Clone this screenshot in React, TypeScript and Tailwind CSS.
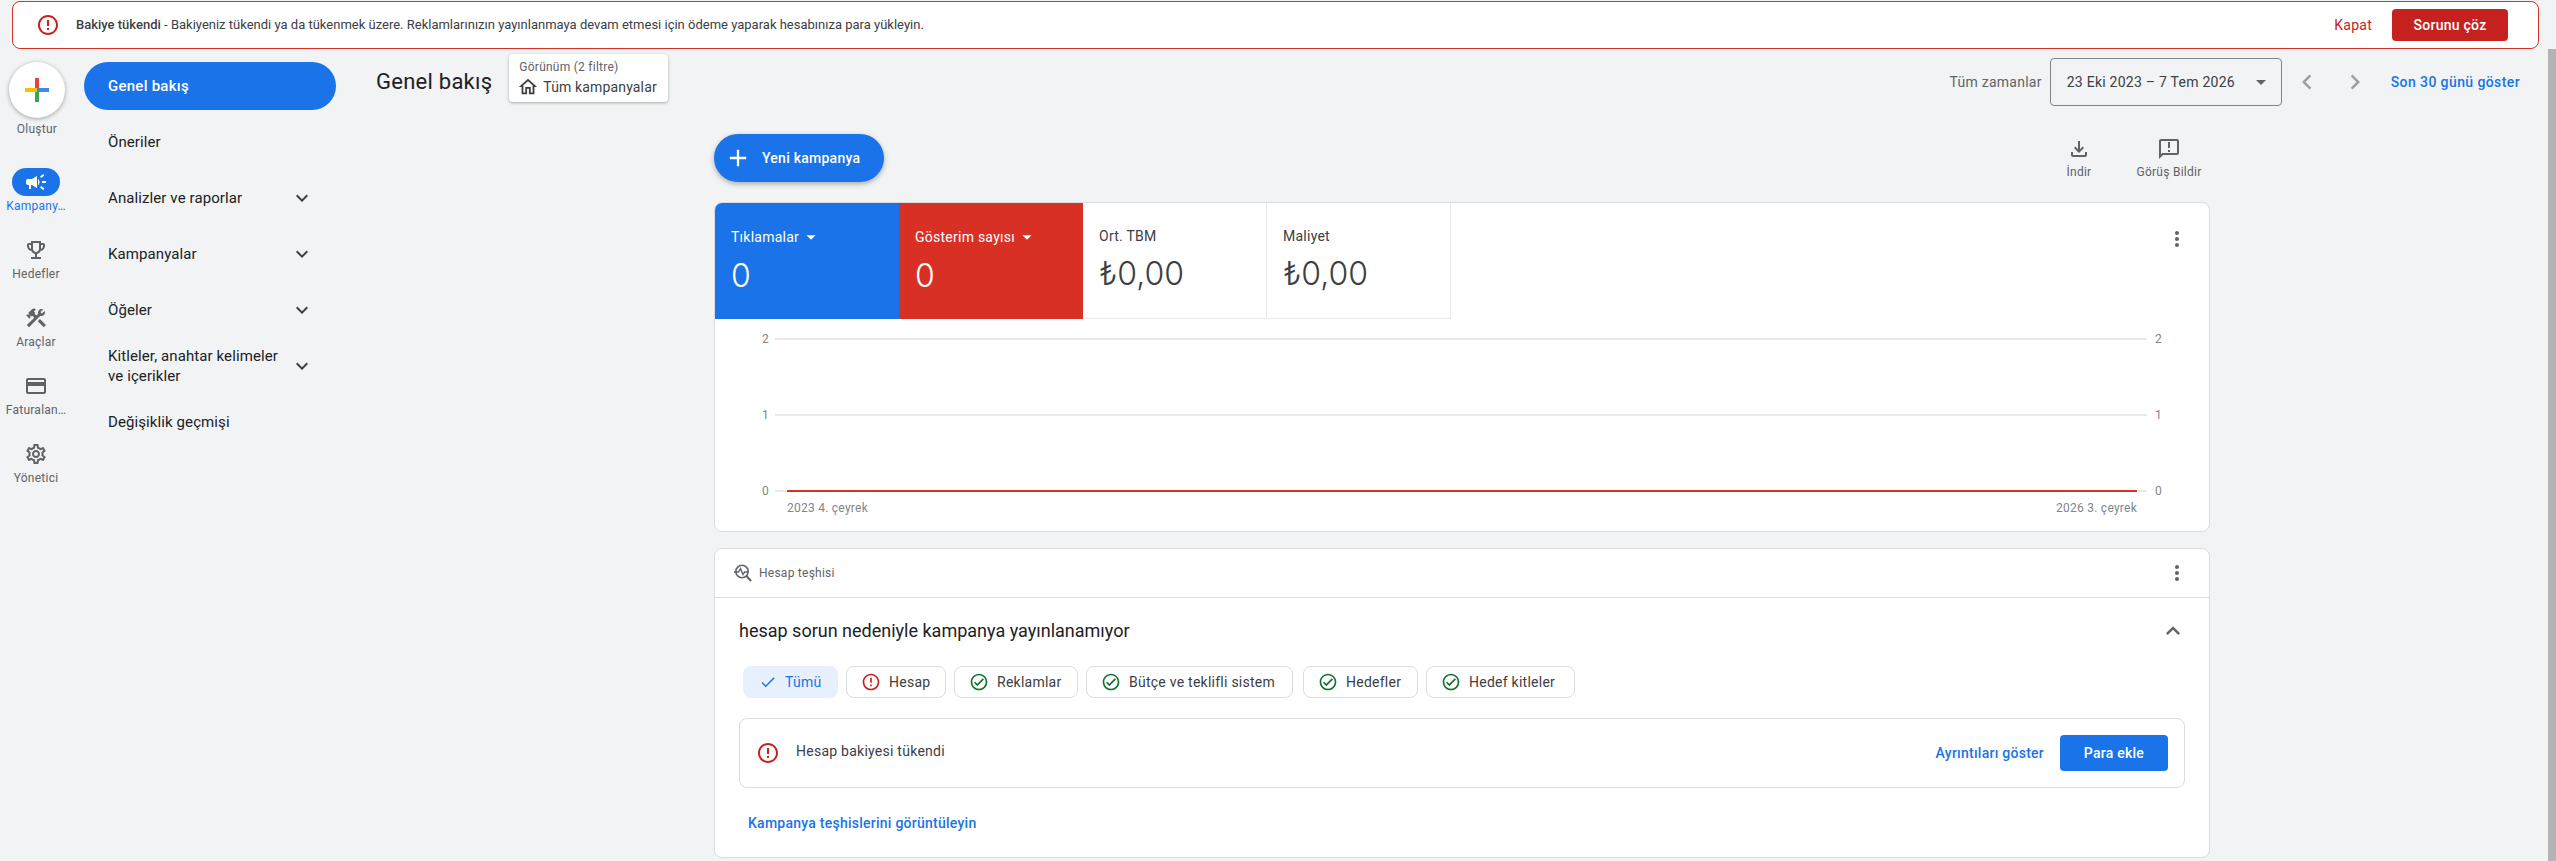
import {
  MdAdd,
  MdArrowDropDown,
  MdCampaign,
  MdCheck,
  MdChevronLeft,
  MdChevronRight,
  MdConstruction,
  MdExpandLess,
  MdExpandMore,
  MdMoreVert,
  MdOutlineAnnouncement,
  MdOutlineCheckCircle,
  MdOutlineCreditCard,
  MdOutlineEmojiEvents,
  MdOutlineErrorOutline,
  MdOutlineFileDownload,
  MdOutlineHome,
  MdOutlineSettings,
} from 'react-icons/md';

const rail = [
  { label: 'Kampany…', icon: MdCampaign, active: true },
  { label: 'Hedefler', icon: MdOutlineEmojiEvents },
  { label: 'Araçlar', icon: MdConstruction },
  { label: 'Faturalan…', icon: MdOutlineCreditCard },
  { label: 'Yönetici', icon: MdOutlineSettings },
];

const nav = [
  { label: 'Öneriler' },
  { label: 'Analizler ve raporlar', more: true },
  { label: 'Kampanyalar', more: true },
  { label: 'Öğeler', more: true },
  { label: 'Kitleler, anahtar kelimeler ve içerikler', more: true },
  { label: 'Değişiklik geçmişi' },
];

const tiles = [
  { label: 'Tıklamalar', value: '0', cls: 'bg-[#1a73e8] text-white', menu: true },
  { label: 'Gösterim sayısı', value: '0', cls: 'bg-[#d93025] text-white', menu: true },
  { label: 'Ort. TBM', value: '₺0,00', cls: 'bg-white text-[#3c4043] border-r border-b border-[#e8eaed]' },
  { label: 'Maliyet', value: '₺0,00', cls: 'bg-white text-[#3c4043] border-r border-b border-[#e8eaed]' },
];

const chips = [
  { label: 'Hesap', width: 'w-[100px]', bad: true },
  { label: 'Reklamlar', width: 'w-[124px]' },
  { label: 'Bütçe ve teklifli sistem', width: 'w-[207px]' },
  { label: 'Hedefler', width: 'w-[115px] ml-[2px]' },
  { label: 'Hedef kitleler', width: 'w-[149px]' },
];

function GooglePlus() {
  return (
    <svg width="24" height="24" viewBox="0 0 24 24">
      <rect x="10" y="0" width="4" height="12" fill="#ea4335" />
      <rect x="12" y="10" width="12" height="4" fill="#4285f4" />
      <rect x="10" y="12" width="4" height="12" fill="#34a853" />
      <rect x="0" y="10" width="12" height="4" fill="#fbbc04" />
    </svg>
  );
}

function DiagnosticsIcon() {
  return (
    <svg width="20" height="20" viewBox="0 0 20 20" fill="none" stroke="#5f6368" strokeWidth="1.6" className="mr-[6px]">
      <circle cx="9" cy="8.5" r="6.2" />
      <path d="M13.5 13l4.5 5" strokeWidth="2" />
      <path d="M1 9h4.5l2-3.5 2.5 6 1.6-2.5H15" strokeWidth="1.4" />
    </svg>
  );
}

function GridRow({ value }: { value: number }) {
  return (
    <div className="flex items-center h-[2px] text-[12px] text-[#80868b]">
      <span className="w-[56px] pr-[2px] text-right">{value}</span>
      <div className="flex-1 h-[2px] bg-[#e8eaed] ml-[4px] pl-[12px] pr-[10px]">
        {value === 0 && <div className="h-[2px] bg-[#d93025]" />}
      </div>
      <span className="w-[62px] pl-[8px] text-left">{value}</span>
    </div>
  );
}

export default function App() {
  return (
    <div className="h-[861px] overflow-hidden bg-[#f1f3f4] font-['Roboto',sans-serif] text-[#3c4043] flex flex-col tracking-[0.25px]">
      <div className="ml-[12px] mr-[17px] mt-[1px] h-[48px] shrink-0 rounded-[8px] border border-[#d93025] bg-white flex items-center pl-[23px] pr-[30px]">
        <MdOutlineErrorOutline className="text-[#c5221f] mr-[16px]" size={24} />
        <span className="text-[13px] tracking-normal text-[#3c4043]"><span className="font-medium">Bakiye tükendi</span> - Bakiyeniz tükendi ya da tükenmek üzere. Reklamlarınızın yayınlanmaya devam etmesi için ödeme yaparak hesabınıza para yükleyin.</span>
        <span className="ml-auto text-[14px] text-[#c5221f]">Kapat</span>
        <button className="ml-[20px] w-[116px] h-[32px] rounded-[4px] bg-[#c5221f] text-white text-[14px] font-medium">Sorunu çöz</button>
      </div>

      <div className="flex-1 min-h-0 flex">
        <div className="w-[76px] shrink-0 flex flex-col items-center pt-[13px]">
          <div className="w-[56px] h-[56px] rounded-full bg-white shadow-[0_1px_4px_rgba(60,64,67,0.45)] flex items-center justify-center ml-[-2px]">
            <GooglePlus />
          </div>
          <span className="text-[12px] mt-[3px] leading-[16px] text-[#5f6368] ml-[-2px]">Oluştur</span>
          <div className="mt-[31px] flex flex-col gap-[13px] ml-[-4px]">
            {rail.map((r) => (
              <div key={r.label} className="w-[68px] h-[55px] flex flex-col items-center">
                <div className={`w-[48px] h-[28px] rounded-full flex items-center justify-center ${r.active ? 'bg-[#1a73e8] text-white' : 'text-[#5f6368]'}`}>
                  <r.icon size={24} />
                </div>
                <span className={`text-[12px] mt-[2px] leading-[16px] whitespace-nowrap ${r.active ? 'text-[#1a73e8]' : 'text-[#5f6368]'}`}>{r.label}</span>
              </div>
            ))}
          </div>
        </div>

        <div className="w-[268px] shrink-0 pl-[8px] pt-[13px] pr-[8px]">
          <div className="h-[48px] rounded-full bg-[#1a73e8] text-white text-[15px] font-medium flex items-center pl-[24px]">Genel bakış</div>
          <div className="mt-[4px]">
            {nav.map((n) => (
              <div key={n.label} className="min-h-[56px] flex items-center pl-[24px] text-[15px] leading-[20px] font-[450] tracking-[0.1px] text-[#202124]">
                <span className="w-[176px]">{n.label}</span>
                {n.more && <MdExpandMore className="ml-[6px] text-[#3c4043]" size={24} />}
              </div>
            ))}
          </div>
        </div>

        <div className="flex-1 min-w-0 flex flex-col">
          <div className="h-[72px] shrink-0 flex items-start pl-[32px] pr-[28px]">
            <h1 className="text-[22px] leading-[28px] mt-[19px] text-[#202124]">Genel bakış</h1>
            <div className="ml-[17px] mt-[5px] w-[159px] h-[48px] rounded-[4px] bg-white shadow-[0_1px_3px_rgba(60,64,67,0.4)] pl-[10px] pt-[4px]">
              <div className="text-[12px] leading-[18px] text-[#5f6368]">Görünüm (2 filtre)</div>
              <div className="flex items-center text-[14px] leading-[20px] tracking-[0.15px] text-[#3c4043]">
                <MdOutlineHome size={22} className="mr-[4px] -ml-[2px]" />Tüm kampanyalar
              </div>
            </div>
            <span className="ml-auto mt-[23px] text-[14px] leading-[20px] text-[#5f6368] mr-[8px]">Tüm zamanlar</span>
            <div className="mt-[9px] w-[232px] h-[48px] rounded-[4px] border border-[#80868b] flex items-center pl-[16px] pr-[8px] text-[14px]">
              23 Eki 2023 – 7 Tem 2026
              <MdArrowDropDown size={24} className="ml-auto text-[#5f6368]" />
            </div>
            <MdChevronLeft size={30} className="mt-[18px] ml-[10px] text-[#9aa0a6]" />
            <MdChevronRight size={30} className="mt-[18px] ml-[18px] text-[#9aa0a6]" />
            <span className="ml-[21px] mt-[23px] text-[14px] leading-[20px] font-medium tracking-[0.4px] text-[#1a73e8]">Son 30 günü göster</span>
          </div>

          <div className="ml-[370px] w-[1496px]">
            <div className="flex items-start h-[81px] pt-[13px]">
              <button className="w-[170px] h-[48px] rounded-full bg-[#1a73e8] text-white text-[14px] font-medium flex items-center pl-[10px] shadow-[0_2px_5px_rgba(60,64,67,0.4)]">
                <MdAdd size={28} className="mr-[10px]" />Yeni kampanya
              </button>
              <div className="ml-auto flex flex-col items-center w-[60px] mr-[26px] mt-[3px] text-[#5f6368]">
                <MdOutlineFileDownload size={24} />
                <span className="text-[12px] mt-[3px] leading-[16px]">İndir</span>
              </div>
              <div className="flex flex-col items-center w-[68px] mr-[7px] mt-[3px] text-[#5f6368]">
                <MdOutlineAnnouncement size={24} />
                <span className="text-[12px] mt-[3px] leading-[16px] whitespace-nowrap">Görüş Bildir</span>
              </div>
            </div>

            <div className="h-[330px] rounded-[8px] border border-[#dadce0] bg-white overflow-hidden">
              <div className="flex">
                {tiles.map((t) => (
                  <div key={t.label} className={`w-[184px] h-[116px] pl-[16px] pt-[23px] ${t.cls}`}>
                    <div className="flex items-center text-[14px] leading-[20px]">
                      {t.label}
                      {t.menu && <MdArrowDropDown size={22} className="ml-[1px]" />}
                    </div>
                    <div className="font-['Inter',sans-serif] text-[32px] leading-[40px] font-[350] tracking-normal mt-[8px]">{t.value}</div>
                  </div>
                ))}
                <div className="flex-1 flex justify-end pt-[24px] pr-[20px]">
                  <MdMoreVert size={24} className="text-[#5f6368]" />
                </div>
              </div>
              <div className="pt-[19px] flex flex-col gap-[74px]">
                <GridRow value={2} />
                <GridRow value={1} />
                <GridRow value={0} />
              </div>
              <div className="flex justify-between pl-[72px] pr-[72px] mt-[8px] text-[12px] leading-[16px] text-[#80868b]">
                <span>2023 4. çeyrek</span>
                <span>2026 3. çeyrek</span>
              </div>
            </div>

            <div className="mt-[16px] h-[310px] rounded-[8px] border border-[#dadce0] bg-white">
              <div className="h-[49px] border-b border-[#dadce0] flex items-center pl-[18px] pr-[20px]">
                <DiagnosticsIcon />
                <span className="text-[12px] text-[#5f6368]">Hesap teşhisi</span>
                <MdMoreVert size={24} className="ml-auto text-[#5f6368]" />
              </div>
              <div className="px-[24px]">
                <div className="flex items-center justify-between h-[68px]">
                  <span className="text-[18px] tracking-normal text-[#202124] -mt-[4px]">hesap sorun nedeniyle kampanya yayınlanamıyor</span>
                  <MdExpandLess size={28} className="-mr-[2px] -mt-[2px] text-[#5f6368]" />
                </div>
                <div className="flex gap-[8px] pl-[4px]">
                  <div className="w-[95px] h-[32px] rounded-[8px] bg-[#e8f0fe] text-[#1a73e8] text-[14px] flex items-center pl-[16px]">
                    <MdCheck size={18} className="mr-[8px]" />Tümü
                  </div>
                  {chips.map((c) => (
                    <div key={c.label} className={`${c.width} h-[32px] rounded-[8px] border border-[#dadce0] text-[14px] text-[#3c4043] flex items-center pl-[14px]`}>
                      {c.bad ? (
                        <MdOutlineErrorOutline size={20} className="mr-[8px] text-[#c5221f]" />
                      ) : (
                        <MdOutlineCheckCircle size={20} className="mr-[8px] text-[#137333]" />
                      )}
                      {c.label}
                    </div>
                  ))}
                </div>
                <div className="mt-[20px] h-[70px] rounded-[8px] border border-[#dadce0] flex items-center pl-[16px] pr-[16px]">
                  <MdOutlineErrorOutline size={24} className="text-[#c5221f] mr-[16px]" />
                  <span className="text-[14px] text-[#3c4043] -mt-[4px]">Hesap bakiyesi tükendi</span>
                  <span className="ml-auto text-[14px] font-medium text-[#1a73e8]">Ayrıntıları göster</span>
                  <button className="ml-[16px] w-[108px] h-[36px] rounded-[4px] bg-[#1a73e8] text-white text-[14px] font-medium">Para ekle</button>
                </div>
                <div className="mt-[25px] pl-[9px] text-[14px] font-medium text-[#1a73e8]">Kampanya teşhislerini görüntüleyin</div>
              </div>
            </div>
          </div>
        </div>

        <div className="w-[8px] shrink-0 bg-[#b4b4b4]" />
      </div>
    </div>
  );
}
